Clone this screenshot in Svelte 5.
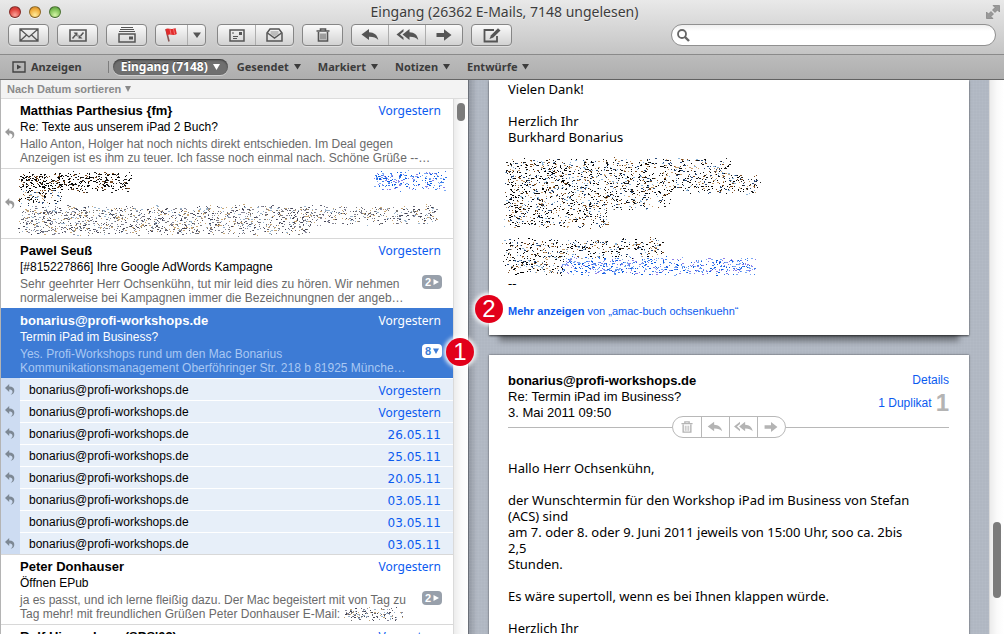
<script>

    // mailboxes in the favorites bar
    const favorites = ['Gesendet', 'Markiert', 'Notizen', 'Entwürfe'];

    // messages above the open thread
    const mails_before = [
        {
            from: 'Matthias Parthesius {fm}',
            subject: 'Re: Texte aus unserem iPad 2 Buch?',
            preview: 'Hallo Anton, Holger hat noch nichts direkt entschieden. Im Deal gegen\nAnzeigen ist es ihm zu teuer. Ich fasse noch einmal nach. Schöne Grüße --…',
            date: 'Vorgestern',
            replied: true
        },
        { hidden: true, replied: true },
        {
            from: 'Pawel Seuß',
            subject: '[#815227866] Ihre Google AdWords Kampagne',
            preview: 'Sehr geehrter Herr Ochsenkühn, tut mir leid dies zu hören. Wir nehmen\nnormalerweise bei Kampagnen immer die Bezeichnungnen der angeb…',
            date: 'Vorgestern',
            count: 2
        },
        {
            from: 'bonarius@profi-workshops.de',
            subject: 'Termin iPad im Business?',
            preview: 'Yes. Profi-Workshops rund um den Mac Bonarius\nKommunikationsmanagement Oberföhringer Str. 218 b 81925 Münche…',
            date: 'Vorgestern',
            count: 8,
            selected: true,
            marker: 1
        }
    ];

    // single messages of the open thread
    const thread = [
        { date: 'Vorgestern', replied: true },
        { date: 'Vorgestern', replied: true },
        { date: '26.05.11', replied: true },
        { date: '25.05.11', replied: true },
        { date: '20.05.11', replied: true },
        { date: '03.05.11', replied: true },
        { date: '03.05.11', replied: false },
        { date: '03.05.11', replied: true }
    ];

    // messages below the open thread
    const mails_after = [
        {
            from: 'Peter Donhauser',
            subject: 'Öffnen EPub',
            preview: 'ja es passt, und ich lerne fleißig dazu. Der Mac begeistert mit von Tag zu\nTag mehr! mit freundlichen Grüßen Peter Donhauser E-Mail:',
            date: 'Vorgestern',
            count: 2,
            scrambled: true
        },
        {
            from: "Rolf Hinnenberg (SPS'03)",
            subject: '',
            preview: '',
            date: 'Vorgestern'
        }
    ];

    const dark = ['#000', '#111', '#222', '#7a4a20', '#2a4a7a', '#c9a070', '#8ab4d8'];
    const grey = ['#667', '#889', '#445', '#c8a878', '#99b4cc', '#777'];
    const blue = ['#0a5be0', '#3b7dec', '#7aa8f4', '#8c7ce8'];


    // helper function to scramble an area into coloured dots
    // an area is [x, y, width, height, dots, colors]
    function speckle(areas) {

        let seed = 7;
        const random = () => {
            seed = (seed * 48271) % 2147483647;
            return seed / 2147483647;
        };

        const paths = {};
        for (const [x, y, w, h, dots, colors] of areas) {
            for (let i = 0; i < dots; i++) {
                const px = Math.round(x + random() * w + (random() - 0.5) * 6);
                const py = Math.round(y + random() * h + (random() - 0.5) * 6);
                const len = random() > 0.65 ? 2 : 1;
                const color = colors[Math.floor(random() * colors.length)];
                paths[color] = (paths[color] || '') + `M${px} ${py}h${len}v1h-${len}z`;
            }
        }
        return Object.entries(paths);
    }

    const noise_row = speckle([
        [18, 5, 110, 16, 420, dark.slice(0, 4)],
        [18, 22, 42, 12, 90, dark],
        [18, 38, 292, 26, 1350, grey],
        [300, 38, 136, 16, 340, grey]
    ]);
    const noise_date = speckle([[3, 4, 70, 16, 220, blue]]);
    const noise_mail = speckle([[4, 3, 50, 9, 130, grey], [50, 6, 12, 5, 10, grey]]);
    const noise_signature = speckle([
        [-3, 15, 224, 15, 500, dark],
        [-3, 30, 252, 17, 680, dark],
        [-3, 48, 164, 15, 360, dark],
        [-3, 63, 104, 18, 270, dark],
        [-3, 95, 158, 16, 370, dark],
        [-3, 111, 58, 17, 160, dark],
        [54, 114, 192, 14, 560, blue]
    ]);

</script>

{#snippet dots(paths)}
    {#each paths as [color, d]}
        <path {d} fill={color} />
    {/each}
{/snippet}

{#snippet arrow_reply()}
    <svg width="18" height="14" viewBox="0 0 18 14"><path d="M0.500 6.500L8 1v3.300c5 0.200 8.500 2.700 9.300 7.700-2.300-2.500-5-3.400-9.300-3.300V12z" fill="currentColor" /></svg>
{/snippet}

{#snippet arrow_reply_all()}
    <svg width="24" height="14" viewBox="0 0 24 14">
        <path d="M7.500 6.500L14.500 1v3.300c5 0.200 8 2.700 8.800 7.700-2.300-2.500-4.800-3.400-8.800-3.300V12z" fill="currentColor" />
        <path d="M8.500 1L1.500 6.500 8.500 12V9.500L5 6.500l3.500-3z" fill="currentColor" />
    </svg>
{/snippet}

{#snippet arrow_forward()}
    <svg width="16" height="14" viewBox="0 0 16 14"><path d="M0.500 5h7.500V1.200L15.500 7 8 12.800V9H0.500z" fill="currentColor" /></svg>
{/snippet}

{#snippet trash()}
    <svg width="14" height="14" viewBox="0 0 14 14">
        <path d="M4.500 2.500V1h5v1.500M0.500 3h13M2.500 4v9h9V4" fill="none" stroke="currentColor" stroke-width="1.600" />
        <path d="M5 5.500v6M7 5.500v6M9 5.500v6" stroke="currentColor" />
    </svg>
{/snippet}

{#snippet replied()}
    <svg width="10" height="11" viewBox="0 0 10 11"><path d="M0 4L4.200 0v2.600c3.500 0 5.300 1.700 5.100 4.400-0.100 1.900-1.400 3.300-3.600 3.700 1.600-1.100 2-2.200 1.700-3.400-0.300-1.200-1.300-1.700-3.200-1.700V8z" fill="currentColor" /></svg>
{/snippet}

{#snippet mail_row(mail)}
    <li class="mail" class:selected={mail.selected}>
        <div class="gutter">
            {#if mail.replied}{@render replied()}{/if}
        </div>

        {#if mail.hidden}
            <svg class="hidden-text" width="350" height="69" viewBox="19 0 350 69" aria-hidden="true">{@render dots(noise_row)}</svg>
            <svg class="hidden-date" width="76" height="24" viewBox="0 0 76 24" aria-hidden="true">{@render dots(noise_date)}</svg>
        {:else}
            <div class="mail-text">
                <div class="mail-top">
                    <h2>{mail.from}</h2>
                    <time>{mail.date}</time>
                </div>
                <p class="subject">{mail.subject}</p>
                <p class="preview">{mail.preview}{#if mail.scrambled}<svg width="66" height="14" viewBox="0 0 66 14" aria-hidden="true">{@render dots(noise_mail)}</svg>{/if}</p>
            </div>
        {/if}

        {#if mail.count}
            <button class="count" aria-label="Konversation">
                {mail.count}
                {#if mail.selected}
                    <svg width="6" height="6" viewBox="0 0 6 6"><path d="M0 0.500h6L3 6z" fill="currentColor" /></svg>
                {:else}
                    <svg width="6" height="6" viewBox="0 0 6 6"><path d="M0.500 0v6L6 3z" fill="currentColor" /></svg>
                {/if}
            </button>
        {/if}

        {#if mail.marker}
            <span class="marker marker-thread">{mail.marker}</span>
        {/if}
    </li>
{/snippet}

<div class="window">

    <header>

        <!-- Title -->
        <div class="titlebar">
            <div class="lights">
                <button class="light red" aria-label="Schließen"></button>
                <button class="light yellow" aria-label="Minimieren"></button>
                <button class="light green" aria-label="Zoomen"></button>
            </div>
            <h1>Eingang (26362 E-Mails, 7148 ungelesen)</h1>
            <button class="fullscreen" aria-label="Vollbild">
                <svg width="14" height="14" viewBox="0 0 14 14"><path d="M7 0.500h6.500V7l-2-2-2.500 2.500L6.500 5 9 2.500zM0.500 7l2 2L5 6.500 7.500 9 5 11.500l2 2H0.500z" fill="#999" stroke="#777" stroke-width="0.600" /></svg>
            </button>
        </div>

        <!-- Toolbar -->
        <div class="toolbar">
            <div class="group">
                <button class="single" aria-label="Empfangen">
                    <svg width="20" height="14" viewBox="0 0 20 14"><path d="M1 1h18v12H1zM1.500 1.500L10 9l8.500-7.500M1.500 12.500L7.500 7M18.500 12.500L12.500 7" fill="none" stroke="currentColor" stroke-width="1.300" /></svg>
                </button>
            </div>
            <div class="group">
                <button class="single" aria-label="Verwandte Mails">
                    <svg width="18" height="13" viewBox="0 0 18 13"><path d="M1 1h16v11H1z" fill="none" stroke="currentColor" stroke-width="1.600" /><path d="M3.500 9.500L6.500 6M14.500 3.500L11.500 7" stroke="currentColor" stroke-width="1.500" /><path d="M4.500 3.500h4V8zM9.500 5.500v4h4z" fill="currentColor" /></svg>
                </button>
            </div>
            <div class="group">
                <button class="single" aria-label="Postfächer">
                    <svg width="18" height="16" viewBox="0 0 18 16"><path d="M3 0.500h12M2 2.500h14M1 4.500h16" stroke="currentColor" /><path d="M1 7h16v8H1z" fill="none" stroke="currentColor" stroke-width="1.500" /><path d="M11 9.500h4v3h-4z" fill="currentColor" /></svg>
                </button>
            </div>
            <div class="group flags">
                <button class="flag" aria-label="Markieren">
                    <svg width="15" height="16" viewBox="0 0 15 16"><path d="M2 2l3 12.500" stroke="#875552" stroke-width="1.600" /><path d="M1.500 2.500C4 0 6 3.500 11.500 1l1.300 6C9 9.500 6.500 6 3 8.500z" fill="#e12c2c" /><path d="M6 2.200l1 5M9.500 1.800l1.200 5.700" stroke="#f47b7b" stroke-width="0.900" /></svg>
                </button>
                <button class="flag-menu" aria-label="Markierung wählen">
                    <svg width="8" height="6" viewBox="0 0 8 6"><path d="M0 0.500h8L4 6z" fill="currentColor" /></svg>
                </button>
            </div>
            <div class="group pair">
                <button aria-label="Werbung">
                    <svg width="16" height="13" viewBox="0 0 16 13"><path d="M1 1h14v11H1z" fill="none" stroke="currentColor" stroke-width="1.500" /><path d="M3 4h2M4 7.500h5M4 9.500h4" stroke="currentColor" /><path d="M10 3h3v3h-3z" fill="currentColor" /></svg>
                </button>
                <button aria-label="Als ungelesen markieren">
                    <svg width="17" height="14" viewBox="0 0 17 14"><path d="M1 5l3-4h9l3 4v8H1z" fill="none" stroke="currentColor" stroke-width="1.500" /><path d="M1.500 5l7 5 7-5" fill="none" stroke="currentColor" stroke-width="1.500" /><path d="M4.500 3h8v3l-4 2.500-4-2.500z" fill="currentColor" opacity="0.300" /></svg>
                </button>
            </div>
            <div class="group">
                <button class="single" aria-label="Löschen">{@render trash()}</button>
            </div>
            <div class="group answer">
                <button aria-label="Antworten">{@render arrow_reply()}</button>
                <button aria-label="Allen antworten">{@render arrow_reply_all()}</button>
                <button aria-label="Weiterleiten">{@render arrow_forward()}</button>
            </div>
            <div class="group">
                <button class="single" aria-label="Neue E-Mail">
                    <svg width="18" height="15" viewBox="0 0 18 15"><path d="M11 2H1.500v11.500H14V8" fill="none" stroke="currentColor" stroke-width="1.800" /><path d="M6.500 11L8 7.300 15 0.300 17.500 2.500 10.300 9.600z" fill="currentColor" /></svg>
                </button>
            </div>

            <label class="search">
                <svg width="13" height="13" viewBox="0 0 13 13"><circle cx="5" cy="5" r="4" fill="none" stroke="#666" stroke-width="1.800" /><path d="M8 8l4 4" stroke="#666" stroke-width="2.400" /></svg>
                <input type="search" aria-label="Suchen" />
            </label>
        </div>

        <!-- Favorites -->
        <nav>
            <button class="show">
                <svg width="14" height="12" viewBox="0 0 14 12"><path d="M1 1h12v10H1z" fill="none" stroke="#444" stroke-width="1.400" /><path d="M5 3.500v5L9.500 6z" fill="#444" /></svg>
                Anzeigen
            </button>
            <button class="current">Eingang (7148) <svg width="7" height="6" viewBox="0 0 7 6"><path d="M0 0h7L3.500 6z" fill="currentColor" /></svg></button>
            {#each favorites as favorite}
                <button>{favorite} <svg width="7" height="6" viewBox="0 0 7 6"><path d="M0 0h7L3.500 5.500z" fill="currentColor" /></svg></button>
            {/each}
        </nav>

    </header>

    <main>

        <!-- Message list -->
        <section class="list">
            <button class="sort">Nach Datum sortieren <svg width="6" height="6" viewBox="0 0 6 6"><path d="M0 0h6L3 6z" fill="currentColor" /></svg></button>
            <div class="list-body">
                <ul>
                    {#each mails_before as mail}
                        {@render mail_row(mail)}
                    {/each}
                    {#each thread as item}
                        <li class="thread-item">
                            <div class="gutter">
                                {#if item.replied}{@render replied()}{/if}
                            </div>
                            <div class="thread-text">
                                <span>bonarius@profi-workshops.de</span>
                                <time class:digits={item.date !== 'Vorgestern'}>{item.date}</time>
                            </div>
                        </li>
                    {/each}
                    {#each mails_after as mail}
                        {@render mail_row(mail)}
                    {/each}
                </ul>
                <div class="scrollbar"><div class="thumb"></div></div>
            </div>
        </section>

        <!-- Conversation -->
        <section class="reader">
            <div class="cards">
                <article class="first">
                    <div class="body">
                        <p>Vielen Dank!</p>
                        <p>Herzlich Ihr<br />Burkhard Bonarius</p>
                    </div>
                    <svg class="signature" width="256" height="130" viewBox="0 0 256 130" aria-hidden="true">{@render dots(noise_signature)}</svg>
                    <div class="body">--</div>
                    <div class="more">
                        <a href="#more"><b>Mehr anzeigen</b> von „amac-buch ochsenkuehn“</a>
                        <span class="marker marker-more">2</span>
                    </div>
                </article>

                <article class="second">
                    <div class="mail-head">
                        <div>
                            <h2>bonarius@profi-workshops.de</h2>
                            <p>Re: Termin iPad im Business?</p>
                            <p>3. Mai 2011 09:50</p>
                        </div>
                        <div class="links">
                            <a href="#details">Details</a>
                            <div class="duplicate"><a href="#duplicate">1 Duplikat</a><span class="number">1</span></div>
                        </div>
                    </div>
                    <div class="divider">
                        <div class="actions">
                            <button aria-label="Löschen">{@render trash()}</button>
                            <button aria-label="Antworten">{@render arrow_reply()}</button>
                            <button aria-label="Allen antworten">{@render arrow_reply_all()}</button>
                            <button aria-label="Weiterleiten">{@render arrow_forward()}</button>
                        </div>
                    </div>
                    <div class="body">
                        <p>Hallo Herr Ochsenkühn,</p>
                        <p>der Wunschtermin für den Workshop iPad im Business von Stefan (ACS) sind<br />am 7. oder 8. oder 9. Juni 2011 jeweils von 15:00 Uhr, soo ca. 2bis 2,5<br />Stunden.</p>
                        <p>Es wäre supertoll, wenn es bei Ihnen klappen würde.</p>
                        <p>Herzlich Ihr</p>
                    </div>
                </article>
            </div>
            <div class="scrollbar"><div class="thumb"></div></div>
        </section>

    </main>

</div>

<style>

    :global(body) {
        margin: 0px;
        background-color: #b0b7c2;
    }

    .window {
        --lucida: 'Lucida Grande', 'Noto Sans', 'Open Sans', sans-serif;
        --helvetica: 'Liberation Sans', Helvetica, Arial, sans-serif;
        display: flex;
        flex-direction: column;
        height: 100vh;
        overflow: hidden;
        font-family: var(--helvetica);
        font-size: 12px;
        color: black;
    }

    h1, h2, p, ul {
        margin: 0px;
        padding: 0px;
    }

    button {
        display: flex;
        align-items: center;
        justify-content: center;
        margin: 0px;
        padding: 0px;
        border: none;
        background: none;
        color: inherit;
        font: inherit;
    }

    svg {
        flex: none;
    }

    a {
        color: #0b5bf0;
        text-decoration: none;
    }

    header {
        flex: none;
        color: #3c3c3c;
        background: linear-gradient(#e9e9e9, #c4c4c4 54px, #bcbcbc 55px, #aeaeae);
        border-bottom: 1px solid #666;
    }

    .titlebar {
        display: grid;
        grid-template-columns: 1fr auto 1fr;
        align-items: center;
        height: 24px;
        padding: 0px 4px 0px 9px;
    }

    .lights {
        display: flex;
        gap: 8px;
    }

    .light {
        width: 12px;
        height: 12px;
        border-radius: 50%;
        border: 1px solid #0006;
        box-shadow: 0 1px 0 #fffa;
    }

    .red { background: radial-gradient(circle at 50% 80%, #fba39a, #e0443e 60%, #b3332f); }
    .yellow { background: radial-gradient(circle at 50% 80%, #ffeb9a, #f0ae3d 60%, #c07d20); }
    .green { background: radial-gradient(circle at 50% 80%, #d4f5a5, #7fc057 60%, #4a8a35); }

    .fullscreen {
        justify-self: end;
    }

    h1 {
        font-family: var(--lucida);
        font-size: 14px;
        line-height: 16px;
        font-weight: 400;
        text-shadow: 0 1px 0 #fff8;
    }

    .toolbar {
        display: flex;
        gap: 8px;
        padding: 0px 8px 8px;
        border-bottom: 1px solid #8a8a8a;
    }

    .group {
        display: flex;
        box-sizing: border-box;
        height: 22px;
        border: 1px solid #868686;
        border-radius: 4px;
        background: linear-gradient(#fafafa, #d2d2d2);
        box-shadow: 0 1px 0 #fff6;
        color: #555;
    }

    .group button + button {
        box-sizing: content-box;
        border-left: 1px solid #adadad;
    }

    .single { width: 39px; }
    .flag { width: 31px; }
    .flag-menu { width: 17px; }
    .flags { margin-right: 3px; }
    .pair button { width: 37px; }
    .answer button { width: 36px; }

    .search {
        display: flex;
        align-items: center;
        gap: 6px;
        box-sizing: border-box;
        flex: 0 1 325px;
        min-width: 80px;
        height: 22px;
        margin-left: auto;
        padding: 0px 8px 0px 5px;
        border: 1px solid #909090;
        border-radius: 11px;
        background: linear-gradient(#f0f0f0, #fff 6px);
    }

    .search input {
        flex: 1;
        min-width: 0px;
        padding: 0px;
        border: none;
        outline: none;
        background: none;
        font: inherit;
    }

    nav {
        display: flex;
        align-items: center;
        gap: 17px;
        height: 24px;
        padding-left: 12px;
        font-family: var(--lucida);
        font-size: 11px;
        line-height: 16px;
        font-weight: 700;
        text-shadow: 0 1px 0 #fff6;
    }

    nav button {
        gap: 5px;
        white-space: nowrap;
    }

    .show {
        padding-right: 26px;
        border-right: 1px solid #7d7d7d;
        line-height: 12px;
    }

    .current {
        margin: 0px -8px 0px -13px;
        padding: 0px 8px;
        border-radius: 8px;
        background-color: #6f6f6f;
        box-shadow: inset 0 1px 2px #0008, 0 1px 0 #fff6;
        color: white;
        font-size: 12px;
        text-shadow: 0 -1px 0 #0006;
    }

    main {
        display: flex;
        flex: 1;
        min-height: 0px;
    }

    /* message list */

    .list {
        display: flex;
        flex-direction: column;
        flex: 0 0 467px;
        min-width: 0px;
        border-left: 1px solid #b4b4b4;
        border-right: 1px solid #6a6f78;
        background-color: white;
    }

    .sort {
        flex: none;
        justify-content: flex-start;
        gap: 4px;
        height: 19px;
        padding-left: 6px;
        border-bottom: 1px solid #dcdcdc;
        background-color: #f3f3f3;
        color: #8a8a8a;
        font-size: 11px;
        font-weight: 700;
    }

    .list-body {
        display: flex;
        flex: 1;
        min-height: 0px;
    }

    ul {
        flex: 1;
        min-width: 0px;
        list-style: none;
    }

    .mail {
        position: relative;
        display: flex;
        box-sizing: border-box;
        height: 70px;
        border-bottom: 1px solid #d8d8d8;
    }

    .thread-item + .mail {
        height: 71px;
        border-top: 1px solid #d8d8d8;
    }

    .gutter {
        display: flex;
        align-items: center;
        flex: 0 0 19px;
        box-sizing: border-box;
        padding-left: 4px;
        color: #999;
    }

    .mail-text {
        flex: 1;
        min-width: 0px;
        padding: 4px 12px 3px 0px;
    }

    .selected .mail-text {
        padding-top: 5px;
    }

    .mail-top {
        display: flex;
        justify-content: space-between;
    }

    h2 {
        font-size: 13px;
        line-height: 16px;
        font-weight: 700;
    }

    time {
        font-family: var(--lucida);
        font-size: 12px;
        line-height: 16px;
        color: #0b5bf0;
    }

    .digits {
        font-family: 'Lucida Grande', 'DejaVu Sans', sans-serif;
    }

    .subject {
        height: 16px;
        line-height: 16px;
    }

    .preview {
        margin-top: 2px;
        line-height: 14px;
        color: #6a6a6a;
        white-space: pre;
    }

    .preview svg {
        vertical-align: top;
    }

    .hidden-date {
        margin-left: auto;
        margin-right: 6px;
    }

    .hidden-text {
        overflow: visible;
    }

    .selected {
        margin-top: -1px;
        border-color: #3a79d3;
        background-color: #3d7bd5;
        color: white;
    }

    .selected time {
        color: white;
    }

    .selected .preview {
        color: #a9c8f3;
    }

    .count {
        position: absolute;
        right: 11px;
        top: 36px;
        gap: 2px;
        width: 20px;
        height: 14px;
        border-radius: 4px;
        background-color: #98a0ab;
        color: white;
        font-size: 11px;
        font-weight: 700;
    }

    .selected .count {
        background-color: white;
        color: #3d7bd5;
    }

    .marker {
        position: absolute;
        z-index: 2;
        width: 28px;
        height: 28px;
        border-radius: 50%;
        background-color: #e2001a;
        box-shadow: 0 0 4px 2px white;
        color: white;
        font-size: 24px;
        line-height: 28px;
        text-align: center;
    }

    .marker-thread {
        right: -21px;
        top: 30px;
    }

    .marker-more {
        left: -33px;
        top: -8px;
    }

    .thread-item {
        display: flex;
        height: 22px;
        background-color: #cddcf2;
    }

    .thread-item .gutter {
        color: #7d8894;
    }

    .thread-text {
        display: flex;
        flex: 1;
        justify-content: space-between;
        box-sizing: border-box;
        padding: 0px 12px 0px 9px;
        border-top: 1px solid white;
        background-color: #e7eff9;
        line-height: 22px;
    }

    .thread-text time {
        line-height: 24px;
    }

    .scrollbar {
        box-sizing: border-box;
        flex: 0 0 15px;
        padding: 4px 3px;
        border-left: 1px solid #dadada;
        background: linear-gradient(90deg, #ececec, #fafafa 50%, #fff);
    }

    .thumb {
        width: 8px;
        height: 18px;
        border-radius: 4px;
        background-color: #7b7b7b;
    }

    /* conversation */

    .reader {
        display: flex;
        flex: 1;
        min-width: 0px;
        background:
            repeating-linear-gradient(90deg, #ffffff08 0px 1px, transparent 1px 3px),
            repeating-linear-gradient(#ffffff08 0px 1px, transparent 1px 3px),
            linear-gradient(90deg, #9298a2, #b0b7c2 8px);
    }

    .reader .scrollbar {
        display: flex;
        align-items: flex-end;
        padding-bottom: 36px;
    }

    .reader .thumb {
        height: 76px;
    }

    .cards {
        flex: 1;
        min-width: 0px;
        padding: 0px 20px;
    }

    article {
        position: relative;
        padding: 1px 20px 16px 19px;
        background-color: white;
        box-shadow: 0 0 2px #0009;
    }

    .first {
        margin-bottom: 20px;
        box-shadow: 0 1px 2px #000a, 0 16px 6px -10px #0006;
    }

    .body {
        padding-right: 36px;
        font-family: var(--lucida);
        font-size: 13px;
        line-height: 16px;
    }

    .body p + p {
        margin-top: 16px;
    }

    .signature {
        display: block;
        overflow: visible;
    }

    .more {
        position: relative;
        margin-top: 12px;
        font-size: 11px;
        line-height: 16px;
    }

    .second {
        padding-top: 17px;
    }

    .mail-head {
        display: flex;
        justify-content: space-between;
        font-size: 13px;
        line-height: 16px;
    }

    .mail-head h2 {
        line-height: 17px;
    }

    .links {
        display: flex;
        flex-direction: column;
        align-items: flex-end;
        gap: 4px;
        font-size: 12px;
    }

    .duplicate {
        display: flex;
        align-items: center;
        gap: 4px;
        height: 22px;
    }

    .number {
        color: #b4b4b4;
        font-size: 24px;
        font-weight: 700;
    }

    .divider {
        display: flex;
        align-items: center;
        justify-content: center;
        margin: -5px 0px 22px;
    }

    .divider::before, .divider::after {
        content: '';
        flex: 1;
        height: 1px;
        background-color: #b8b8b8;
    }

    .actions {
        display: flex;
        height: 20px;
        border: 1px solid #b8b8b8;
        border-radius: 11px;
        color: #b4b4b4;
    }

    .actions button {
        width: 28px;
    }

    .actions button + button {
        border-left: 1px solid #b8b8b8;
    }

    .actions svg {
        height: 12px;
    }

</style>
